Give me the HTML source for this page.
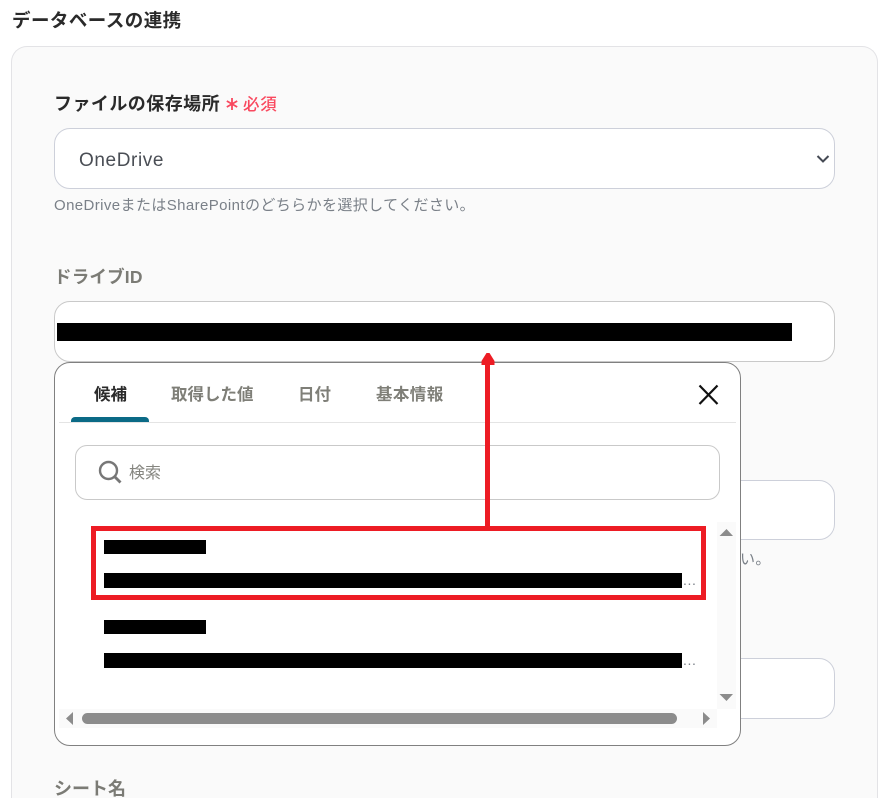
<!DOCTYPE html>
<html lang="ja"><head><meta charset="utf-8">
<style>
html,body{margin:0;padding:0;background:#fff}
body{width:887px;height:802px;position:relative;overflow:hidden;font-family:"Liberation Sans","Noto Sans CJK JP",sans-serif}
.a{position:absolute;box-sizing:border-box}
.t{position:absolute;white-space:nowrap;line-height:1}
.box{position:absolute;box-sizing:border-box;background:#fff;border:1px solid #cdd0da;border-radius:16px}
.k{position:absolute;background:#000}
.r{position:absolute;background:#ed1c24}
</style></head><body>
<div class="t" style="left:12px;top:12px;font-size:18.500px;font-weight:700;color:#2a2a2a;letter-spacing:.45px">データベースの連携</div>
<div class="a" style="left:11px;top:46px;width:867px;height:752px;background:#fafafa;border:1px solid #e3e3e6;border-bottom:none;border-radius:16px 16px 0 0"></div>

<div class="t" style="left:54px;top:95px;font-size:18px;font-weight:700;color:#2a2a2a;letter-spacing:.45px">ファイルの保存場所</div>
<svg class="a" style="left:225px;top:97px" width="14" height="14" viewBox="0 0 14 14"><path d="M7 1 V13 M1.800 4 L12.200 10 M12.200 4 L1.800 10" fill="none" stroke="#f9495f" stroke-width="1.800"/></svg>
<div class="t" style="left:243px;top:97px;font-size:16.500px;font-weight:500;color:#f9495f;letter-spacing:.8px">必須</div>
<div class="box" style="left:54px;top:128px;width:781px;height:61px"></div>
<div class="t" style="left:79px;top:151px;font-size:19px;color:#4a4e55;letter-spacing:.6px">OneDrive</div>
<svg class="a" style="left:815px;top:154px" width="16" height="10" viewBox="0 0 16 10"><path d="M2.500 2 L8 7.500 L13.500 2" fill="none" stroke="#454a54" stroke-width="2"/></svg>
<div class="t" style="left:54px;top:198px;font-size:15px;color:#7a8088;letter-spacing:.4px">OneDriveまたはSharePointのどちらかを選択してください。</div>

<div class="t" style="left:54px;top:269px;font-size:17.500px;font-weight:700;color:#7b7b75;letter-spacing:.2px">ドライブID</div>
<div class="box" style="left:54px;top:301px;width:781px;height:61px;border-color:#c9c9c9"></div>
<div class="k" style="left:57px;top:323px;width:735px;height:18px"></div>

<div class="box" style="left:700px;top:480px;width:135px;height:60px"></div>
<div class="t" style="left:740px;top:552px;font-size:15px;color:#7a8088;letter-spacing:.4px">い。</div>
<div class="box" style="left:700px;top:658px;width:135px;height:61px"></div>
<div class="t" style="left:54px;top:780px;font-size:18px;font-weight:700;color:#7b7b75;letter-spacing:0">シート名</div>

<div class="a" style="left:54px;top:362px;width:687px;height:384px;background:#fff;border:1px solid #808080;border-radius:16px"></div>
<div class="t" style="left:94px;top:387px;font-size:16.500px;font-weight:700;color:#2a2a2a">候補</div>
<div class="t" style="left:171px;top:387px;font-size:16.500px;font-weight:700;color:#7f7f78">取得した値</div>
<div class="t" style="left:298px;top:387px;font-size:16.500px;font-weight:700;color:#7f7f78">日付</div>
<div class="t" style="left:376px;top:387px;font-size:16.500px;font-weight:700;color:#7f7f78;letter-spacing:.4px">基本情報</div>
<div class="a" style="left:59px;top:422px;width:677px;height:1px;background:#e4e4e4"></div>
<div class="a" style="left:71px;top:417px;width:78px;height:5px;background:#0b6a86;border-radius:4px 4px 0 0"></div>
<svg class="a" style="left:697px;top:384px" width="23" height="22" viewBox="0 0 23 22"><path d="M2.500 1.500 L20.500 20 M20.500 1.500 L2.500 20" fill="none" stroke="#111" stroke-width="2.200"/></svg>
<div class="a" style="left:75px;top:445px;width:645px;height:55px;border:1px solid #c9c9c9;border-radius:12px;background:#fff"></div>
<svg class="a" style="left:97px;top:459px" width="26" height="26" viewBox="0 0 26 26"><circle cx="11.500" cy="11.500" r="8.500" fill="none" stroke="#777" stroke-width="2.400"/><path d="M17.500 17.500 L23.500 23.500" stroke="#777" stroke-width="2.800" fill="none"/></svg>
<div class="t" style="left:129px;top:466px;font-size:16px;color:#85857f">検索</div>

<div class="a" style="left:717px;top:522px;width:19px;height:187px;background:#fafafa"></div>
<div class="a" style="left:59px;top:709px;width:658px;height:19px;background:#fafafa"></div>
<svg class="a" style="left:717px;top:522px" width="19" height="187"><path d="M2.500 14 L9.500 7 L16 14Z M2.500 172 L16 172 L9.500 179Z" fill="#8c8c8c"/></svg>
<svg class="a" style="left:59px;top:709px" width="658" height="19"><path d="M14 3 L7 9.500 L14 16Z M644 3 L651 9.500 L644 16Z" fill="#8c8c8c"/></svg>
<div class="a" style="left:82px;top:713px;width:595px;height:11px;background:#8c8c8c;border-radius:6px"></div>

<div class="k" style="left:104px;top:540px;width:102px;height:14px"></div>
<div class="k" style="left:104px;top:573px;width:578px;height:15px"></div>
<div class="t" style="left:683px;top:573px;font-size:14px;color:#7a8088;letter-spacing:.6px">...</div>
<div class="k" style="left:104px;top:620px;width:102px;height:14px"></div>
<div class="k" style="left:104px;top:653px;width:578px;height:15px"></div>
<div class="t" style="left:683px;top:653px;font-size:14px;color:#7a8088;letter-spacing:.6px">...</div>

<div class="a" style="left:91px;top:526px;width:615px;height:74px;border:5px solid #ed1c24"></div>
<div class="r" style="left:485px;top:364px;width:5px;height:163px"></div>
<svg class="a" style="left:481px;top:353px" width="14" height="12"><path d="M5.500 0 L8.500 0 L13.500 8 L13.500 12 L0.500 12 L0.500 8Z" fill="#ed1c24"/></svg>
</body></html>
